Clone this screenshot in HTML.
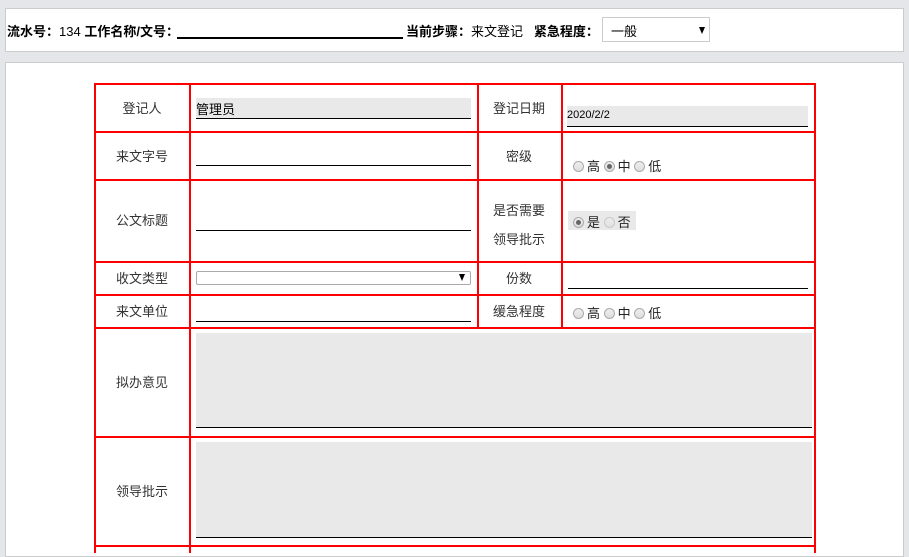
<!DOCTYPE html>
<html><head><meta charset="utf-8"><style>
*{margin:0;padding:0;box-sizing:border-box}
body{width:909px;height:551px;overflow:hidden;background:#e4e6e9;font-family:"Liberation Sans","Noto Sans CJK SC",sans-serif;font-size:13px;color:#222;position:relative}
.a{position:absolute}
.h{background:#f00;height:2px}
.v{background:#f00;width:2px}
.lbl{position:absolute;text-align:center;width:94px;font-size:13px;color:#333}
.inp{position:absolute;border-bottom:1px solid #000}
.g{background:#e9e9e9}
.r{display:inline-block;width:11px;height:11px;border-radius:50%;border:1px solid #aaa;background:linear-gradient(#eee,#ddd);vertical-align:-1px;margin-right:3px;position:relative}
.r.on::after{content:"";position:absolute;left:2px;top:2px;width:5px;height:5px;border-radius:50%;background:#666}
.tri{position:absolute;width:0;height:0;border-left:3.5px solid transparent;border-right:3.5px solid transparent;border-top:7px solid #000}
</style></head><body>
<div class="a" style="left:5px;top:8px;width:899px;height:44px;background:#fff;border:1px solid #ccc"></div>
<div class="a" style="left:7px;top:21px;font-size:13px;color:#000;white-space:nowrap"><b>流水号：</b>134 <b>工作名称/文号：</b></div>
<div class="a" style="left:177px;top:37px;width:226px;height:2px;background:#000"></div>
<div class="a" style="left:406px;top:21px;white-space:nowrap;color:#000"><b>当前步骤：</b>来文登记 &nbsp; <b>紧急程度：</b></div>
<div class="a" style="left:602px;top:17px;width:108px;height:25px;border:1px solid #ccc;background:#fff;color:#000"><span style="position:absolute;left:8px;top:3px">一般</span><span class="tri" style="right:4px;top:9px"></span></div>
<div class="a" style="left:5px;top:62px;width:899px;height:495px;background:#fff;border:1px solid #ccc"></div>

<div class="a h" style="left:94px;top:83px;width:722px"></div>
<div class="a h" style="left:94px;top:131px;width:722px"></div>
<div class="a h" style="left:94px;top:179px;width:722px"></div>
<div class="a h" style="left:94px;top:261px;width:722px"></div>
<div class="a h" style="left:94px;top:294px;width:722px"></div>
<div class="a h" style="left:94px;top:327px;width:722px"></div>
<div class="a h" style="left:94px;top:436px;width:722px"></div>
<div class="a h" style="left:94px;top:545px;width:722px"></div>
<div class="a v" style="left:94px;top:83px;height:470px"></div>
<div class="a v" style="left:189px;top:83px;height:470px"></div>
<div class="a v" style="left:477px;top:83px;height:246px"></div>
<div class="a v" style="left:561px;top:83px;height:246px"></div>
<div class="a v" style="left:814px;top:83px;height:470px"></div>

<div class="lbl" style="left:95px;top:98px">登记人</div>
<div class="lbl" style="left:95px;top:146px">来文字号</div>
<div class="lbl" style="left:95px;top:210px">公文标题</div>
<div class="lbl" style="left:95px;top:268px">收文类型</div>
<div class="lbl" style="left:95px;top:301px">来文单位</div>
<div class="lbl" style="left:95px;top:372px">拟办意见</div>
<div class="lbl" style="left:95px;top:481px">领导批示</div>
<div class="lbl" style="left:473px;top:98px;width:92px">登记日期</div>
<div class="lbl" style="left:473px;top:146px;width:92px">密级</div>
<div class="lbl" style="left:473px;top:196px;width:92px;line-height:29px">是否需要<br>领导批示</div>
<div class="lbl" style="left:473px;top:268px;width:92px">份数</div>
<div class="lbl" style="left:473px;top:301px;width:92px">缓急程度</div>

<div class="inp g" style="left:196px;top:98px;width:275px;height:21px;padding:1px 0;color:#000">管理员</div>
<div class="inp" style="left:196px;top:150px;width:275px;height:16px"></div>
<div class="inp" style="left:196px;top:214px;width:275px;height:17px"></div>
<div class="a" style="left:196px;top:271px;width:275px;height:14px;border:1px solid #aaa;border-radius:2px"><span class="tri" style="right:5px;top:2px"></span></div>
<div class="inp" style="left:196px;top:305px;width:275px;height:17px"></div>
<div class="inp g" style="left:567px;top:106px;width:241px;height:21px;padding:3px 0 0;font-size:11px;color:#000">2020/2/2</div>
<div class="a" style="left:573px;top:156px;white-space:nowrap"><span class="r"></span>高 <span class="r on"></span>中 <span class="r"></span>低</div>
<div class="a g" style="left:568px;top:211px;width:68px;height:19px;padding:1px 0 0 5px;white-space:nowrap"><span class="r on"></span>是 <span class="r" style="opacity:.5"></span>否</div>
<div class="inp" style="left:568px;top:270px;width:240px;height:19px"></div>
<div class="a" style="left:573px;top:303px;white-space:nowrap"><span class="r"></span>高 <span class="r"></span>中 <span class="r"></span>低</div>
<div class="inp g" style="left:196px;top:333px;width:616px;height:95px"></div>
<div class="inp g" style="left:196px;top:442px;width:616px;height:96px"></div>
</body></html>
